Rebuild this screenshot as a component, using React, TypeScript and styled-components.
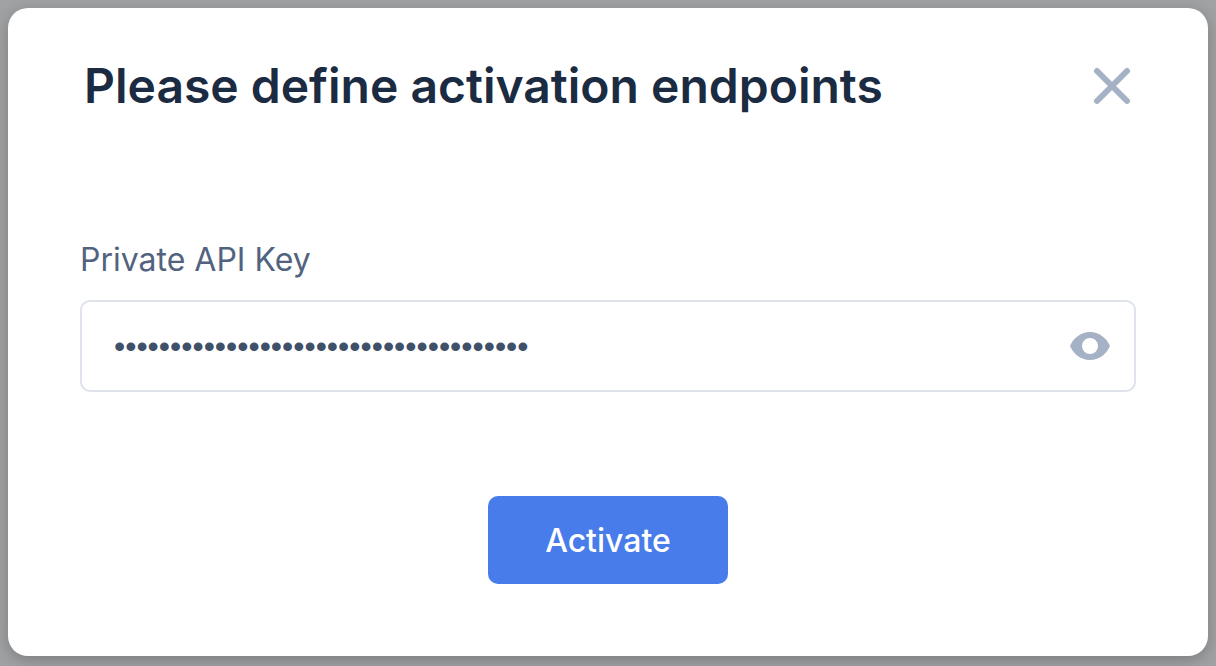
import React, { useState } from "react";
import styled, { createGlobalStyle } from "styled-components";

const GlobalStyle = createGlobalStyle`
  *, *::before, *::after { box-sizing: border-box; }
  body {
    margin: 0;
    background: #a1a2a4;
    font-family: Inter, "Liberation Sans", sans-serif;
  }
`;

const Backdrop = styled.main`
  min-height: 100vh;
  padding: 8px 8px 10px;
  display: flex;
`;

const Dialog = styled.section`
  flex: 1;
  padding: 48px 72px 72px;
  border-radius: 20px;
  background: #fff;
  box-shadow: 0 4px 16px rgba(0, 0, 0, 0.24);
`;

const Header = styled.header`
  display: flex;
  align-items: center;
  justify-content: space-between;
  padding-left: 4px;
`;

const Title = styled.h1`
  margin: 0;
  color: #1b2b41;
  font-size: 48px;
  font-weight: 600;
  line-height: 60px;
`;

const IconButton = styled.button`
  display: flex;
  padding: 0;
  border: 0;
  background: none;
  color: #a5b1c5;
  cursor: pointer;
`;

const Form = styled.form`
  display: flex;
  flex-direction: column;
  margin-top: 124px;
`;

const Label = styled.label`
  color: #52637f;
  font-size: 32px;
  line-height: 40px;
`;

const Field = styled.div`
  display: flex;
  align-items: center;
  height: 92px;
  margin-top: 20px;
  padding: 0 20px 0 32px;
  border: 2px solid #dde2eb;
  border-radius: 10px;
`;

const KeyInput = styled.input`
  flex: 1;
  min-width: 0;
  height: 100%;
  padding: 0;
  border: 0;
  outline: 0;
  background: none;
  color: #3f5069;
  font-family: "Liberation Sans", Arial, sans-serif;
  font-size: 32px;
`;

const SubmitButton = styled.button`
  align-self: center;
  width: 240px;
  height: 88px;
  margin-top: 104px;
  border: 0;
  border-radius: 10px;
  background: #487ceb;
  color: #fff;
  font-family: inherit;
  font-size: 32px;
  font-weight: 500;
  cursor: pointer;
`;

export default function App() {
  const [apiKey, setApiKey] = useState("3f9a1c7e-52bd-4e08-9d6b-a1708c24ef5b0");
  const [visible, setVisible] = useState(false);

  return (
    <Backdrop>
      <GlobalStyle />
      <Dialog role="dialog" aria-labelledby="dialog-title">
        <Header>
          <Title id="dialog-title">Please define activation endpoints</Title>
          <IconButton type="button" aria-label="Close">
            <svg width="48" height="48" viewBox="0 0 48 48" fill="none" stroke="currentColor" strokeWidth="6" strokeLinecap="round">
              <path d="M9 9L39 39M39 9L9 39" />
            </svg>
          </IconButton>
        </Header>
        <Form onSubmit={(event) => event.preventDefault()}>
          <Label htmlFor="api-key">Private API Key</Label>
          <Field>
            <KeyInput
              id="api-key"
              type={visible ? "text" : "password"}
              value={apiKey}
              onChange={(event) => setApiKey(event.target.value)}
            />
            <IconButton type="button" aria-label="Show key" onClick={() => setVisible(!visible)}>
              <svg width="48" height="48" viewBox="0 0 48 48" fill="currentColor">
                <path
                  fillRule="evenodd"
                  d="M24 10C34 10 41 17 44 24C41 31 34 38 24 38C14 38 7 31 4 24C7 17 14 10 24 10ZM24 16A8 8 0 1 0 24 32A8 8 0 1 0 24 16Z"
                />
              </svg>
            </IconButton>
          </Field>
          <SubmitButton type="submit">Activate</SubmitButton>
        </Form>
      </Dialog>
    </Backdrop>
  );
}
